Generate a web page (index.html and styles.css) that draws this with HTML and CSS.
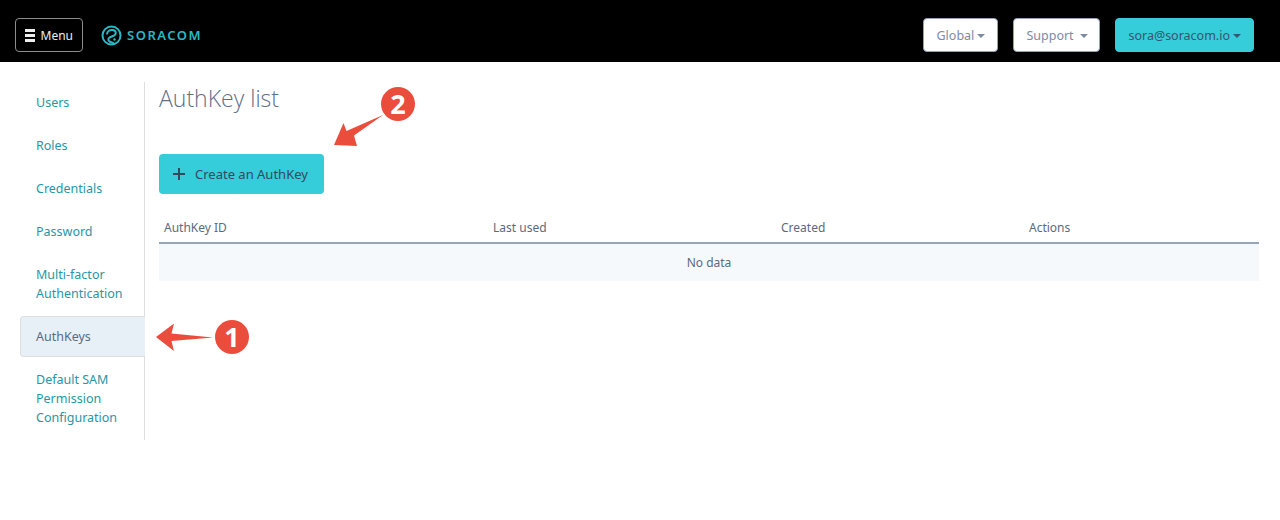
FILE: index.html
```html
<!DOCTYPE html>
<html lang="en">
<head>
  <meta charset="UTF-8" />
  <title>AuthKey list</title>
  <link rel="stylesheet" href="styles.css">
</head>
<body>
  <nav class="navbar">
    <button class="menu-btn"><span class="bars"><i></i><i></i><i></i></span>Menu</button>
    <div class="logo">
      <svg width="21" height="21" viewBox="0 0 21 21" fill="none" stroke="#2bb8c4" stroke-width="2">
        <circle cx="10.500" cy="10.500" r="9"/>
        <path d="M6 9.500C6 6 9 4.500 12 5C15.500 5.800 15.500 9.300 13 10.500L8.500 12.500C7 13.500 7 15.500 8.500 16.500L13 18.500"/>
        <circle cx="13.500" cy="14.500" r="1.200" fill="#2bb8c4" stroke="none"/>
      </svg>
      <span class="logo-text">SORACOM</span>
    </div>
    <div class="nav-right">
      <button class="nav-btn global">Global<span class="caret"></span></button>
      <button class="nav-btn support">Support<span class="caret"></span></button>
      <button class="nav-btn account">sora@soracom.io<span class="caret"></span></button>
    </div>
  </nav>

  <div class="page">
    <ul class="sidebar">
      <li><a href="#">Users</a></li>
      <li><a href="#">Roles</a></li>
      <li><a href="#">Credentials</a></li>
      <li><a href="#">Password</a></li>
      <li><a href="#">Multi-factor Authentication</a></li>
      <li class="active"><a href="#">AuthKeys</a></li>
      <li><a href="#">Default SAM Permission Configuration</a></li>
    </ul>

    <main class="main">
      <h2>AuthKey list</h2>
      <button class="create-btn"><span class="plus"></span>Create an AuthKey</button>
      <table>
        <thead>
          <tr><th class="col-id">AuthKey ID</th><th class="col-used">Last used</th><th class="col-created">Created</th><th>Actions</th></tr>
        </thead>
        <tbody>
          <tr><td colspan="4">No data</td></tr>
        </tbody>
      </table>
    </main>
  </div>

  <!-- callouts drawn over the page -->
  <svg class="callout-arrows" width="1280" height="520" viewBox="0 0 1280 520">
    <path d="M156 337L174 323.500L171.500 333.500L213 337.500L171.500 341L174 351Z" fill="#eb4d3d"/>
    <path d="M334 145L343.500 123L346.500 131L383 115L354 135.500L357 146Z" fill="#eb4d3d"/>
  </svg>
  <div class="badge badge-one">1</div>
  <div class="badge badge-two">2</div>
</body>
</html>
```

FILE: styles.css
```css
* {
  box-sizing: border-box;
}
body {
  margin: 0;
  background-color: #fff;
  color: #34495e;
  font-family: 'Noto Sans', sans-serif;
  font-size: 12.5px;
  line-height: 19px;
}
button {
  font-family: inherit;
  font-size: 12.5px;
  white-space: nowrap;
  cursor: pointer;
}
.navbar {
  display: flex;
  align-items: center;
  height: 62px;
  padding: 8px 26px 0 15px;
  background-color: #000;
}
.menu-btn {
  display: flex;
  align-items: center;
  height: 34px;
  width: 68px;
  padding: 0 9px;
  color: #eee;
  font-size: 12px;
  background: none;
  border: 1px solid #8c8c8c;
  border-radius: 4px;
}
.bars {
  display: flex;
  flex-direction: column;
  gap: 2px;
  width: 12px;
  margin-right: 6px;
}
.bars i {
  display: block;
  height: 3px;
  background-color: #eee;
}
.logo {
  display: flex;
  align-items: center;
  margin-left: 18px;
}
.logo-text {
  margin-left: 5px;
  color: #2bb8c4;
  font-size: 13px;
  font-weight: 600;
  letter-spacing: 1.5px;
}
.nav-right {
  display: flex;
  gap: 15px;
  margin-left: auto;
}
.nav-btn {
  height: 34px;
  padding: 0 12px;
  color: #7c8ba3;
  background-color: #fff;
  border: 1px solid #94a3b8;
  border-radius: 4px;
}
.nav-btn.global {
  width: 75px;
}
.nav-btn.support {
  width: 87px;
}
.nav-btn.account {
  color: #34566e;
  background-color: #34cdd9;
  border-color: #34cdd9;
}
.caret {
  display: inline-block;
  margin-left: 3px;
  vertical-align: middle;
  border-top: 4px solid;
  border-left: 4px solid transparent;
  border-right: 4px solid transparent;
}
.support .caret {
  margin-left: 6px;
}
.page {
  display: flex;
  padding: 20px 21px 0 20px;
}
.sidebar {
  flex: none;
  width: 125px;
  margin: 0 14px 0 0;
  padding: 0;
  list-style: none;
  border-right: 1px solid #dedede;
}
.sidebar li {
  margin-bottom: 4px;
}
.sidebar a {
  display: block;
  padding: 11px 16px 9px;
  color: #2796a5;
  text-decoration: none;
}
.sidebar .active {
  margin-right: -1px;
  margin-bottom: 2px;
  background-color: #e8f0f7;
  border: 1px solid #dedede;
  border-right: none;
  border-radius: 4px 0 0 4px;
}
.sidebar .active a {
  padding: 10px 15px;
  color: #5a6b80;
}
.main {
  flex: 1;
}
h2 {
  margin: 0 0 40px;
  color: #5f6f8a;
  font-family: 'Open Sans', sans-serif;
  font-size: 23px;
  font-weight: 300;
  line-height: 32px;
}
.create-btn {
  display: flex;
  align-items: center;
  height: 40px;
  width: 165px;
  padding: 0 14px;
  color: #34495e;
  font-size: 13px;
  background-color: #34cdd9;
  border: none;
  border-radius: 4px;
}
.plus {
  width: 12px;
  height: 12px;
  margin-right: 10px;
  background: linear-gradient(#34495e, #34495e) center / 12px 2px no-repeat,
    linear-gradient(#34495e, #34495e) center / 2px 12px no-repeat;
}
table {
  width: 100%;
  margin-top: 24px;
  border-collapse: collapse;
  table-layout: fixed;
}
th {
  padding: 0 5px 5px;
  height: 25px;
  color: #5a6b80;
  font-size: 12px;
  font-weight: 400;
  text-align: left;
  border-bottom: 2px solid #94a6ba;
}
.col-id {
  width: 329px;
}
.col-used {
  width: 288px;
}
.col-created {
  width: 248px;
}
td {
  height: 38px;
  padding: 0 5px;
  color: #5a6b80;
  font-size: 12px;
  text-align: center;
  background-color: #f6f9fc;
}
.callout-arrows {
  position: absolute;
  top: 0;
  left: 0;
  pointer-events: none;
}
.badge {
  position: absolute;
  width: 34px;
  height: 34px;
  color: #fff;
  font-size: 27px;
  font-weight: 700;
  line-height: 34px;
  text-align: center;
  background-color: #eb4d3d;
  border-radius: 50%;
}
.badge-one {
  top: 320px;
  left: 215px;
}
.badge-two {
  top: 87px;
  left: 381px;
}
```
